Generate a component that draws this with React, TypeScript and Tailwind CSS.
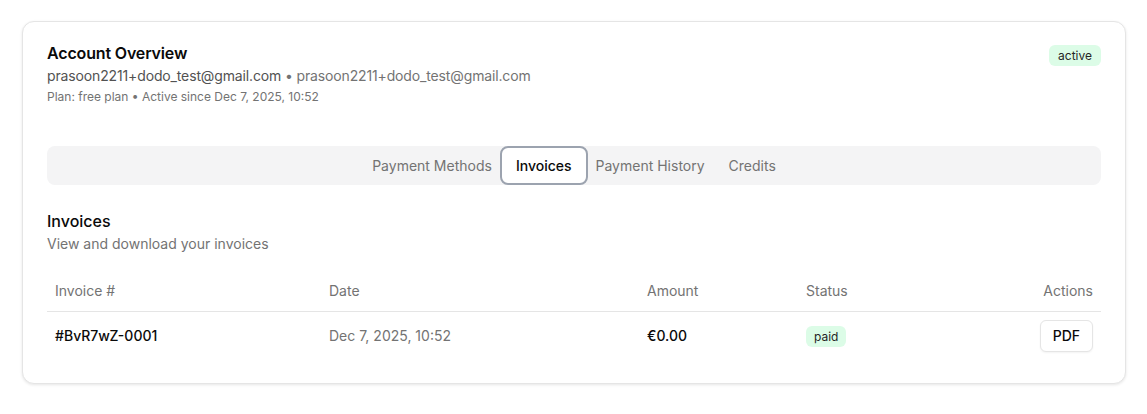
import React from 'react';

const tabs = [
  { label: 'Payment Methods', cls: 'px-2' },
  { label: 'Invoices', cls: '' },
  { label: 'Payment History', cls: 'px-2' },
  { label: 'Credits', cls: 'pl-4 pr-2' },
];

export default function App() {
  return (
    <div className="min-h-[414px] bg-white px-[22px] pt-[21px] font-['Inter',sans-serif] text-[#0a0a0a]">
      <div className="w-[1104px] rounded-xl border border-[#e5e5e5] bg-white px-[24px] pt-[19px] pb-[23px] shadow-[0_1px_3px_rgba(0,0,0,0.1)]">
        {/* header */}
        <div className="flex items-start justify-between">
          <div>
            <h1 className="text-base font-semibold leading-6 tracking-[-0.01em]">Account Overview</h1>
            <p className="mt-[1px] text-sm leading-5 tracking-[-0.01em] text-[#737373]">
              <span className="text-[#525252]">prasoon2211+dodo_test@gmail.com</span> • prasoon2211+dodo_test@gmail.com
            </p>
            <p className="mt-[1px] text-xs leading-5 text-[#737373]">Plan: free plan • Active since Dec 7, 2025, 10:52</p>
          </div>
          <span className="mt-[4px] rounded-md bg-[#dcfce7] px-[9px] py-[3px] text-xs leading-[15px] text-[#262626]">active</span>
        </div>

        {/* tabs */}
        <div className="mt-[39px] flex h-[39px] items-center justify-center rounded-lg bg-[#f4f4f5]">
          {tabs.map((t) =>
            t.label === 'Invoices' ? (
              <button
                key={t.label}
                className="h-[39px] rounded-lg border-2 border-[#9ca3af] bg-white px-[14px] text-sm font-medium text-[#0a0a0a]"
              >
                {t.label}
              </button>
            ) : (
              <button key={t.label} className={`h-[39px] text-sm text-[#737373] ${t.cls}`}>
                {t.label}
              </button>
            )
          )}
        </div>

        {/* invoices section */}
        <div className="mt-[24px]">
          <h2 className="text-base font-medium leading-6">Invoices</h2>
          <p className="mt-[1px] text-sm leading-5 text-[#737373]">View and download your invoices</p>
        </div>

        <table className="mt-[17px] w-full table-fixed text-left text-sm">
          <thead>
            <tr className="h-[40px] border-b border-[#e5e5e5] text-[#737373]">
              <th className="w-[274px] px-2 font-normal">Invoice #</th>
              <th className="w-[318px] px-2 font-normal">Date</th>
              <th className="w-[159px] px-2 font-normal">Amount</th>
              <th className="w-[159px] px-2 font-normal">Status</th>
              <th className="px-2 text-right font-normal">Actions</th>
            </tr>
          </thead>
          <tbody>
            <tr className="h-[49px]">
              <td className="px-2 font-medium">#BvR7wZ-0001</td>
              <td className="px-2 text-[#737373]">Dec 7, 2025, 10:52</td>
              <td className="px-2 font-medium">€0.00</td>
              <td className="px-2">
                <span className="rounded-md bg-[#dcfce7] px-2 py-[3px] text-xs text-[#262626]">paid</span>
              </td>
              <td className="px-2 text-right">
                <button className="h-[32px] rounded-md border border-[#e5e5e5] bg-white px-3 text-sm font-medium shadow-[0_1px_2px_rgba(0,0,0,0.05)]">
                  PDF
                </button>
              </td>
            </tr>
          </tbody>
        </table>
      </div>
    </div>
  );
}
